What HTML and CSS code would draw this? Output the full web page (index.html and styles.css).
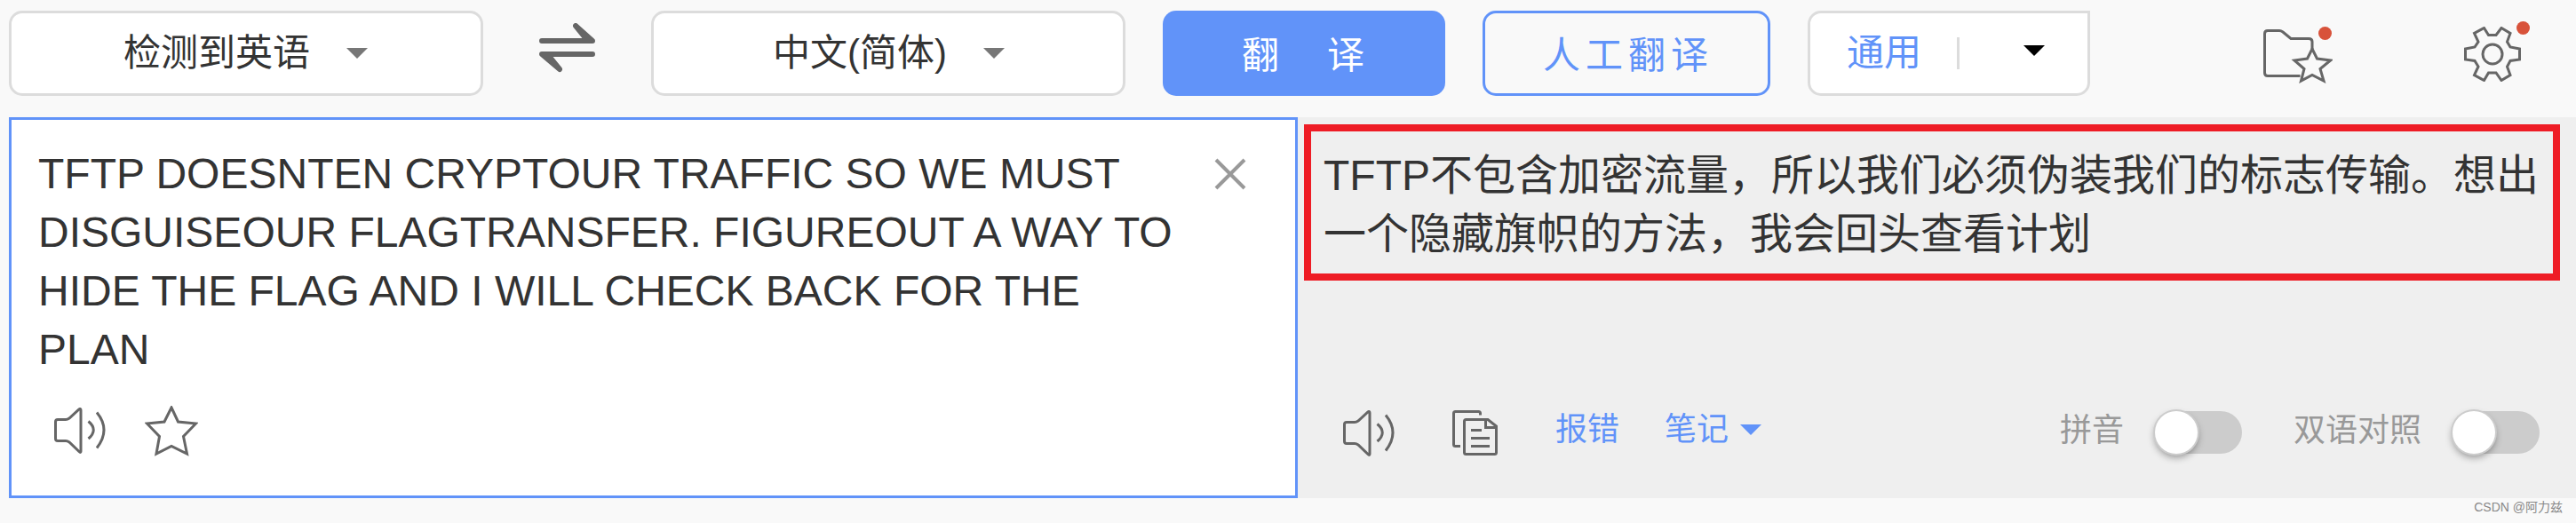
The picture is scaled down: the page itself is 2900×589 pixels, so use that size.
FILE: index.html
```
<!DOCTYPE html>
<html lang="zh-CN">
    <head>
        <meta charset="UTF-8">
        <title>翻译</title>
        <link rel="stylesheet" href="styles.css">
    </head>
    <body>
        <div class="toolbar">
            <div class="select lang from">
                <span>检测到英语</span>
                <i class="arrow"></i>
            </div>
            <svg class="swap" width="64" height="56" viewBox="0 0 64 56">
                <path d="M3 20H60L41 3L54 19M60 35H3L23 52L10 36" />
            </svg>
            <div class="select lang to">
                <span>中文(简体)</span>
                <i class="arrow"></i>
            </div>
            <button class="btn translate">翻<span>译</span></button>
            <button class="btn human">人工翻译</button>
            <div class="select domain">
                <span>通用</span>
                <i class="divider"></i>
                <i class="arrow"></i>
            </div>
            <div class="tool folder">
                <svg width="78" height="62" viewBox="0 0 78 62">
                    <path d="M41.500 52.500H5Q1.500 52.500 1.500 49V5Q1.500 1.500 5 1.500H18Q20 1.500 22 3L31 10.500H51Q55 10.500 55 14V22" />
                    <path d="M55 22L60.500 33L75.500 35L64 44.500L68 58L55 51.500L42.500 58L46 44.500L35 35L49.500 33Z" />
                </svg>
                <i class="dot"></i>
            </div>
            <div class="tool gear">
                <svg width="64" height="62" viewBox="0 0 64 62">
                    <path d="M22.500 1.500L27.500 9.500H36L42 1.500L52 7.500L48.500 17L52 23L62.500 25V37L52 38.500L48.500 45L52 54.500L42 60.500L36 52H27.500L22.500 60.500L11.500 54.500L16 45L12 38.500L1.500 37V25L12 23L16 17L11.500 7.500Z" />
                    <circle cx="32" cy="31" r="11" />
                </svg>
                <i class="dot"></i>
            </div>
        </div>
        <div class="panels">
            <div class="source">
                <p class="text">TFTP DOESNTEN CRYPTOUR TRAFFIC SO WE MUST DISGUISEOUR FLAGTRANSFER. FIGUREOUT A WAY TO HIDE THE FLAG AND I WILL CHECK BACK FOR THE PLAN</p>
                <svg class="close" width="36" height="36" viewBox="0 0 36 36">
                    <path d="M2 2L34 34M34 2L2 34" />
                </svg>
                <div class="actions">
                    <svg width="60" height="54" viewBox="0 0 60 54">
                        <path d="M1.500 16Q1.500 13.500 4 13.500H13Q15 13.500 17 12L28 2Q30 0.500 30 3V49Q30 51.500 28 49.500L17 39Q15 37.500 13 37.500H4Q1.500 37.500 1.500 35Z" />
                        <path d="M38.500 15.500Q50 25 38.500 35M48 5.500Q64 25 48 45.500" />
                    </svg>
                    <svg class="star" width="60" height="58" viewBox="0 0 60 58">
                        <path d="M30 2L37.500 18L57.500 20L43.500 34.500L47.500 54L30 45.500L13 54L16.500 34.500L2.500 20L22 18Z" />
                    </svg>
                </div>
            </div>
            <div class="target">
                <div class="result">TFTP不包含加密流量，所以我们必须伪装我们的标志传输。想出一个隐藏旗帜的方法，我会回头查看计划</div>
                <div class="actions">
                    <svg width="60" height="54" viewBox="0 0 60 54">
                        <path d="M1.500 16Q1.500 13.500 4 13.500H13Q15 13.500 17 12L28 2Q30 0.500 30 3V49Q30 51.500 28 49.500L17 39Q15 37.500 13 37.500H4Q1.500 37.500 1.500 35Z" />
                        <path d="M38.500 15.500Q50 25 38.500 35M48 5.500Q64 25 48 45.500" />
                    </svg>
                    <svg class="copy" width="52" height="54" viewBox="0 0 52 54">
                        <path d="M9 40.500H3.500Q1.500 40.500 1.500 38.500V3.500Q1.500 1.500 3.500 1.500H29.500Q31.500 1.500 31.500 3.500V5.500" />
                        <path d="M15.500 10.500H40L49.500 18V47.500Q49.500 49.500 47.500 49.500H15.500Q13.500 49.500 13.500 47.500V12.500Q13.500 10.500 15.500 10.500ZM37.500 11V19.500H49.500M21 22.500H33M21 31.500H42M21 40.500H42" />
                    </svg>
                    <a class="report">报错</a>
                    <a class="note">笔记<i class="arrow"></i></a>
                    <label class="pinyin">拼音<i class="switch"></i></label>
                    <label class="bilingual">双语对照<i class="switch"></i></label>
                </div>
            </div>
        </div>
        <div class="watermark">CSDN @阿力兹</div>
    </body>
</html>
```

FILE: styles.css
```
* {
    box-sizing: border-box;
}
body {
    margin: 0;
    height: 589px;
    overflow: hidden;
    background: #f9f9f9;
    color: #333;
    font-family: "Liberation Sans", "Noto Sans CJK SC", sans-serif;
}
svg {
    fill: none;
    stroke: #666;
    stroke-width: 3;
    flex: none;
}
.toolbar {
    display: flex;
    height: 132px;
    padding: 12px 0 0 10px;
    font-size: 42px;
}
.select {
    display: flex;
    align-items: center;
    height: 96px;
    background: #fff;
    border: 3px solid #dcdcdc;
    border-radius: 15px;
    white-space: nowrap;
}
.select span {
    line-height: 60px;
    margin-top: -1px;
}
.arrow {
    width: 24px;
    border: 12px solid transparent;
    border-top-color: #777;
    border-bottom: 0;
}
.lang {
    width: 534px;
}
.from {
    padding-left: 126px;
}
.to {
    padding-left: 134px;
}
.lang .arrow {
    margin-left: 41px;
}
.swap {
    margin: 14px 62px 0 63px;
    stroke-width: 6;
    stroke-linecap: round;
    stroke-linejoin: round;
}
.btn {
    height: 96px;
    padding: 0 0 3px;
    border-radius: 15px;
    font: inherit;
}
.translate {
    width: 318px;
    margin-left: 42px;
    padding-right: 2px;
    border: none;
    background: #6193f9;
    color: #fff;
}
.translate span {
    margin-left: 54px;
}
.human {
    width: 324px;
    margin: 0 42px;
    padding-left: 4px;
    border: 3px solid #6193f9;
    background: none;
    color: #6193f9;
    letter-spacing: 6px;
}
.domain {
    width: 318px;
    padding-left: 41px;
    border-top-right-radius: 0;
    color: #6193f9;
}
.divider {
    width: 3px;
    height: 36px;
    margin: 0 72px 0 40px;
    background: #dcdcdc;
}
.domain .arrow {
    margin-top: -6px;
    border-top-color: #000;
}
.tool {
    position: relative;
}
.folder {
    margin: 21px 0 0 195px;
}
.gear {
    margin: 18px 0 0 148px;
}
.dot {
    position: absolute;
    top: -3px;
    right: 1px;
    width: 15px;
    height: 15px;
    border-radius: 50%;
    background: #d8523a;
}
.gear .dot {
    top: -6px;
    right: -10px;
}
.panels {
    display: flex;
    height: 429px;
    padding-left: 10px;
    font-size: 48px;
    line-height: 66px;
}
.source {
    position: relative;
    display: flex;
    flex-direction: column;
    width: 1451px;
    padding: 28px 0 0 30px;
    background: #fff;
    border: 3px solid #6193f9;
}
.text {
    width: 1300px;
    height: 264px;
    margin: 0;
}
.close {
    position: absolute;
    top: 43px;
    right: 55px;
    stroke: #999;
    stroke-width: 4;
}
.actions {
    display: flex;
    align-items: center;
}
.source .actions {
    height: 58px;
    margin: 30px 0 0 18px;
}
.star {
    margin-left: 42px;
}
.target {
    flex: 1;
    padding: 8px 0 0 7px;
    background: #efefef;
}
.result {
    width: 1414px;
    height: 176px;
    padding: 17px 0 0 14px;
    border: 8px solid #ee1c25;
}
.target .actions {
    height: 60px;
    margin: 143px 0 0 44px;
    font-size: 36px;
    line-height: 60px;
}
.copy {
    margin-left: 63px;
}
.report,
.note {
    margin: -11px 0 0 64px;
    color: #6193f9;
}
.note {
    display: flex;
    align-items: center;
    margin-left: 51px;
}
.note .arrow {
    margin-left: 13px;
    border-top-color: #6193f9;
}
.pinyin,
.bilingual {
    display: flex;
    align-items: center;
    margin: -8px 0 0 336px;
    color: #999;
}
.bilingual {
    margin-left: 58px;
}
.switch {
    width: 98px;
    height: 48px;
    margin: 4px 0 0 35px;
    border-radius: 24px;
    background: #ccc;
}
.switch::before {
    content: "";
    display: block;
    width: 48px;
    height: 48px;
    border-radius: 50%;
    background: #fff;
    box-shadow: 0 0 0 2px #ccc, 0 4px 8px rgba(0, 0, 0, 0.4);
}
.watermark {
    padding-right: 15px;
    color: #888;
    font-size: 14px;
    line-height: 21px;
    text-align: right;
}
```
